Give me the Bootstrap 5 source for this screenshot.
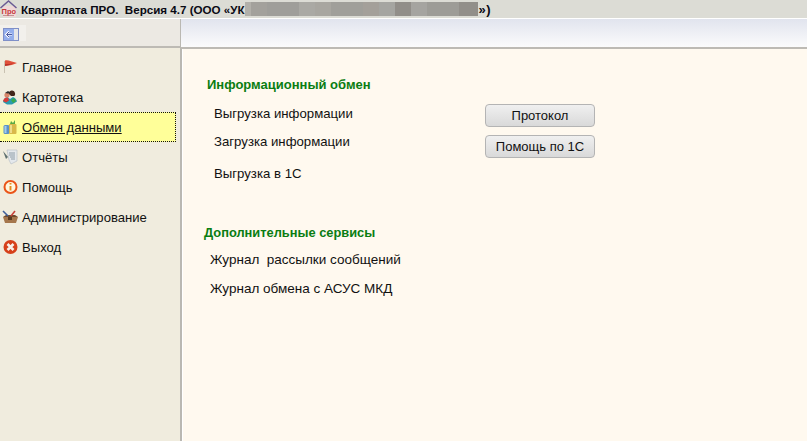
<!DOCTYPE html>
<html lang="ru">
<head>
<meta charset="utf-8">
<title>Квартплата ПРО</title>
<link href="https://cdn.jsdelivr.net/npm/bootstrap@5.3.0/dist/css/bootstrap.min.css" rel="stylesheet">
<style>
html,body{height:100%;margin:0;overflow:hidden}
body{font-family:"Liberation Sans",Arial,sans-serif;font-size:13px;color:#111;background:#fff;line-height:15px}
.app-frame{width:807px;height:441px}
.title-bar{height:18px;background:#dcdcd5;font-weight:700;font-size:11.6px;color:#0a0a14;white-space:pre}
.title-logo{width:18px;height:18px;margin-right:3px;flex:none}
.title-end{font-size:13px;letter-spacing:.5px;margin-left:1px}
.redact{width:233px;height:14px;flex:none;background:linear-gradient(90deg,#b2b0aa 0 6px,#a3a19c 6px 22px,#9f9e9a 22px 54px,#aaa9a4 54px 70px,#a8a6a0 70px 86px,#a09f9a 86px 118px,#a4a09a 118px 134px,#a5a5a1 134px 150px,#918e89 150px 166px,#a5a4a0 166px 182px,#9d9c97 182px 214px,#928f8a 214px 233px)}
.body-row{height:423px;border-top:1px solid #fff}
.side-col{width:180px;flex:none;background:#f0ecde}
.side-tools{height:29px;background:#ece9e3;border-bottom:2px solid #bdbab4;padding-top:6px}
.tool-btn{width:26px;height:16px;background:#f2f0ec;padding:3px 0 0 3px;line-height:0}
.side-list{padding-top:4px}
.side-item{height:30px;padding-left:2px;gap:4px;color:#111;text-decoration:none;font-size:13.1px}
.side-item svg{width:16px;height:16px;flex:none}
.side-item.is-on{width:176px;background:#ffff99;border:1px dotted #111;border-left-style:none;text-decoration:underline}
.col-sep{width:1px;flex:none;background:#bab8b2}
.main-col{background:#fff9ef}
.main-top{height:28px;background:linear-gradient(#e1e4ee,#fbfbfc)}
.main-rule{height:2px;background:#bdbab4}
.main-body{padding-top:28px;background:linear-gradient(90deg,#bab8b2 0 1px,#fff 1px 2px,#fff9ef 2px)}
.sec-title{color:#0a7d12;font-weight:700}
.sec-a{margin-left:26px}
.sec-b{margin-left:23px;margin-top:44px;font-size:12.85px}
.pair-row{margin:12px 0 0 33px;width:381px}
.label-stack{padding-top:2px;font-size:13.2px}
.lbl-two{margin-top:13px}
.lbl-three{margin-top:17px}
.btn-stack{gap:8px}
.act-btn{width:110px;height:23px;padding:0;font-size:13px;line-height:21px;color:#111;background:linear-gradient(#f0f0f0,#d9d9d9);border:1px solid #b4b4b4;border-radius:4px;font-family:inherit}
.row-b{margin-left:29px;font-size:13.5px;white-space:pre}
.row-b1{margin-top:12px}
.row-b2{margin-top:14px}
</style>
</head>
<body>
<div class="app-frame d-flex flex-column">
  <div class="title-bar d-flex align-items-center">
    <svg class="title-logo" viewBox="0 0 18 18"><rect x="3" y="6" width="13" height="11" fill="#f0d8d8"/><path d="M.5 8 8.500 1l8 7" fill="none" stroke="#6a5a94" stroke-width="1.500"/><text x="1.500" y="13.500" font-size="7.500" fill="#c8383c" font-family="Liberation Sans">Про</text><path d="M3 15.500h11" stroke="#a77" stroke-width=".7"/></svg><span>Квартплата ПРО.  Версия 4.7 (ООО «УК</span><span class="redact"></span><span class="title-end">»)</span>
  </div>
  <div class="body-row d-flex">
    <div class="side-col d-flex flex-column">
      <div class="side-tools"><div class="tool-btn">
        <svg width="16" height="13" viewBox="0 0 16 13"><rect x=".5" y=".5" width="15" height="12" fill="#e6e6e8" stroke="#7f8fc8"/><rect x="1" y="1" width="10" height="11" fill="#94aeec"/><path d="M9 6.500H3.500M6 3.500l-3 3 3 3" fill="none" stroke="#fff" stroke-width="1.800"/><path d="M9 6.500H4M6 4l-2.500 2.500L6 9" fill="none" stroke="#1c2f8c" stroke-width=".8"/></svg>
      </div></div>
      <nav class="side-list d-flex flex-column">
        <a class="side-item d-flex align-items-center" href="#"><svg viewBox="0 0 16 16"><path d="M2.500 2v12" stroke="#c9c2b2"/><path d="M3 1.500c3-1 6 1 12 2.500-3 1.500-7 2.500-12 3z" fill="#e0503a"/><path d="M3 5c3 0 6 0 9-1-3 1.500-6 2.500-9 3z" fill="#b8332a"/></svg><span>Главное</span></a>
        <a class="side-item d-flex align-items-center" href="#"><svg viewBox="0 0 16 16"><circle cx="5" cy="6" r="2.600" fill="#d8876a"/><path d="M7 5a3 3 0 0 1 6-1c.5 2-.5 3-1 3H9z" fill="#43251a"/><path d="M3 4l3-2 3 2-3 .5z" fill="#2a2a2a"/><path d="M1 13c.5-3 2-5 5-4.500l2 1.500 3-2c2 .5 3.500 2.500 4 4.500l-5 3H5z" fill="#2a9ab0"/><path d="M1 12c1-3 3-4 5-3.500l1 3-3 2z" fill="#d83a38"/><path d="M9 11l3-2 2 3-3 2z" fill="#3aa84a"/></svg><span>Картотека</span></a>
        <a class="side-item is-on d-flex align-items-center" href="#"><svg viewBox="0 0 16 16"><rect x="1.500" y="6" width="6" height="9" rx="1.500" fill="#5b92c8"/><rect x="2.500" y="7" width="2" height="7" fill="#a6cbe8"/><rect x="7" y="5" width="7.500" height="10" rx="1" fill="#d8b84a"/><rect x="8" y="6" width="2" height="8" fill="#efdc8a"/><path d="M8 5l1-3 2 2 2-3v4z" fill="#5aa844"/></svg><span>Обмен данными</span></a>
        <a class="side-item d-flex align-items-center" href="#"><svg viewBox="0 0 16 16"><path d="M5 1h10v11l-6 3-2-4z" fill="#e4e8ec" stroke="#b4bcc4" stroke-width=".6"/><path d="M1 2l5 6-2 2z" fill="#5e7070"/><path d="M7 4h6M7 6h6M8 8h5M9 10h4" stroke="#8595a2" stroke-width=".9"/></svg><span>Отчёты</span></a>
        <a class="side-item d-flex align-items-center" href="#"><svg viewBox="0 0 16 16"><circle cx="8.500" cy="8" r="6" fill="#fff6de" stroke="#ea5418" stroke-width="2"/><path d="M8.500 4v1.500M8.500 7v4.500" stroke="#e38a1c" stroke-width="1.900"/></svg><span>Помощь</span></a>
        <a class="side-item d-flex align-items-center" href="#"><svg viewBox="0 0 16 16"><path d="M1 8h15l-2 6H3z" fill="#a5764c"/><path d="M1 8l3-2h9l3 2z" fill="#6f4a2e"/><path d="M6 8h4v3H6z" fill="#5a3a20"/><path d="M1 2l5 5" stroke="#3f5f9a" stroke-width="1.600"/><path d="M13 2 9 7" stroke="#c8423a" stroke-width="1.600"/></svg><span>Администрирование</span></a>
        <a class="side-item d-flex align-items-center" href="#"><svg viewBox="0 0 16 16"><circle cx="8.500" cy="8" r="7" fill="#d6401a"/><path d="M5.500 5l6 6M11.500 5l-6 6" stroke="#f8f0e8" stroke-width="2.600"/></svg><span>Выход</span></a>
      </nav>
    </div>
    <div class="col-sep"></div>
    <div class="main-col flex-grow-1 d-flex flex-column">
      <div class="main-top"></div>
      <div class="main-rule"></div>
      <div class="main-body flex-grow-1">
        <div class="sec-title sec-a">Информационный обмен</div>
        <div class="pair-row d-flex justify-content-between">
          <div class="label-stack">
            <div>Выгрузка информации</div>
            <div class="lbl-two">Загрузка информации</div>
            <div class="lbl-three">Выгрузка в 1С</div>
          </div>
          <div class="btn-stack d-flex flex-column align-items-end">
            <button class="act-btn" type="button">Протокол</button>
            <button class="act-btn" type="button">Помощь по 1С</button>
          </div>
        </div>
        <div class="sec-title sec-b">Дополнительные сервисы</div>
        <div class="row-b row-b1">Журнал  рассылки сообщений</div>
        <div class="row-b row-b2">Журнал обмена с АСУС МКД</div>
      </div>
    </div>
  </div>
</div>
</body>
</html>
